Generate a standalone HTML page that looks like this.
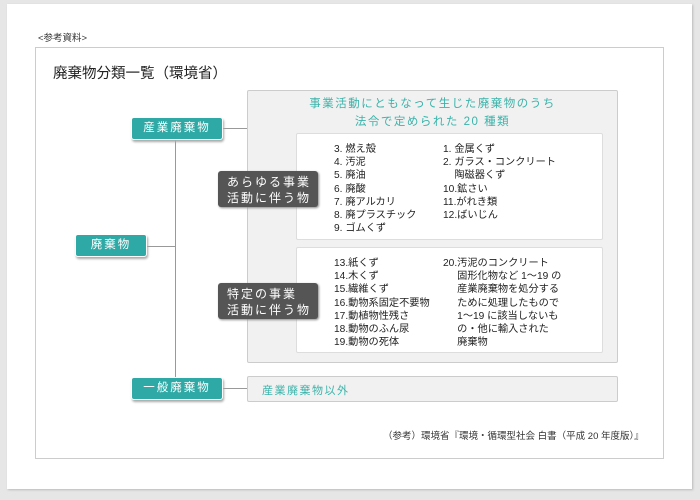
<!DOCTYPE html>
<html><head><meta charset="utf-8"><style>
*{margin:0;padding:0;box-sizing:border-box}
body{width:700px;height:500px;background:#e6e6e6;position:relative;overflow:hidden;font-family:"Liberation Sans","Noto Sans CJK JP",sans-serif;color:#333}
.a{position:absolute}
.page{left:7px;top:4px;width:685px;height:485px;background:#fff;box-shadow:1px 1px 2px #bbb}
.frame{left:35px;top:47px;width:629px;height:412px;border:1px solid #ccc}
.btn{background:#2fa9a5;color:#fff;font-size:11.5px;letter-spacing:2px;text-align:center;border-radius:3px;box-shadow:1px 2px 2px #aaa;border:1px solid #fff}
.dark{background:#555;color:#fff;font-size:12px;letter-spacing:2px;line-height:16px;padding:3px 0 0 9px;border-radius:3px;box-shadow:1px 1px 2px #888}
.gray{background:#f1f1f1;border:1px solid #ccc;border-radius:2px}
.wbox{background:#fff;border:1px solid #ddd;border-radius:2px}
.list{font-size:10.2px;line-height:13.2px;color:#222;white-space:pre}
.ln{background:#999}
</style></head><body>
<div class="a page"></div>
<div class="a" style="left:38px;top:30px;font-size:9.5px">&lt;参考資料&gt;</div>
<div class="a frame"></div>
<div class="a" style="left:53px;top:62px;font-size:14.5px;color:#222">廃棄物分類一覧（環境省）</div>

<div class="a ln" style="left:175px;top:140px;width:1px;height:249px"></div>
<div class="a ln" style="left:147px;top:246px;width:28px;height:1px"></div>
<div class="a ln" style="left:223px;top:128px;width:24px;height:1px"></div>
<div class="a ln" style="left:223px;top:388px;width:24px;height:1px"></div>

<div class="a gray" style="left:247px;top:90px;width:371px;height:273px"></div>
<div class="a" style="left:247px;top:95px;width:371px;text-align:center;font-size:11.5px;line-height:18px;color:#3bb3aa;letter-spacing:1.5px">事業活動にともなって生じた廃棄物のうち<br>法令で定められた 20 種類</div>
<div class="a wbox" style="left:296px;top:133px;width:307px;height:107px"></div>
<div class="a wbox" style="left:296px;top:247px;width:307px;height:106px"></div>
<div class="a list" style="left:334px;top:143px">3. 燃え殻
4. 汚泥
5. 廃油
6. 廃酸
7. 廃アルカリ
8. 廃プラスチック
9. ゴムくず</div>
<div class="a list" style="left:443px;top:143px">1. 金属くず
2. ガラス・コンクリート
    陶磁器くず
10.鉱さい
11.がれき類
12.ばいじん</div>
<div class="a list" style="left:334px;top:257px">13.紙くず
14.木くず
15.繊維くず
16.動物系固定不要物
17.動植物性残さ
18.動物のふん尿
19.動物の死体</div>
<div class="a list" style="left:443px;top:257px">20.汚泥のコンクリート
     固形化物など 1～19 の
     産業廃棄物を処分する
     ために処理したもので
     1～19 に該当しないも
     の・他に輸入された
     廃棄物</div>

<div class="a dark" style="left:218px;top:171px;width:100px;height:36px">あらゆる事業<br>活動に伴う物</div>
<div class="a dark" style="left:218px;top:283px;width:100px;height:36px">特定の事業<br>活動に伴う物</div>

<div class="a btn" style="left:131px;top:117px;width:92px;height:23px;line-height:21px">産業廃棄物</div>
<div class="a btn" style="left:75px;top:234px;width:72px;height:23px;line-height:21px">廃棄物</div>
<div class="a btn" style="left:131px;top:377px;width:92px;height:23px;line-height:21px">一般廃棄物</div>

<div class="a gray" style="left:247px;top:376px;width:371px;height:26px"></div>
<div class="a" style="left:262px;top:382px;font-size:11px;color:#3bb3aa;letter-spacing:1.5px">産業廃棄物以外</div>

<div class="a" style="left:383px;top:428px;font-size:9.5px;color:#333">（参考）環境省『環境・循環型社会 白書（平成 20 年度版）』</div>
</body></html>
